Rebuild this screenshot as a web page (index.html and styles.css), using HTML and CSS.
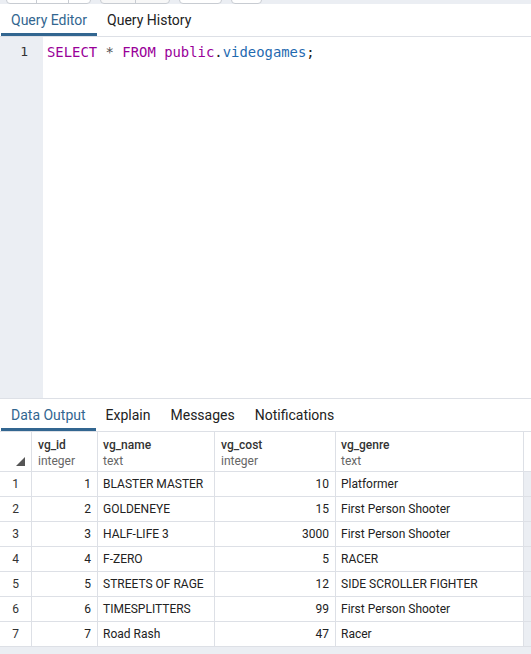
FILE: index.html
```html
<!DOCTYPE html>
<html>
<head>
<meta charset="utf-8">
<link rel="stylesheet" href="styles.css">
</head>
<body>
<div class="app">
  <div class="toolbar">
    <div class="btn-group"><span class="btn w30"></span><span class="btn w32"></span><span class="btn w22"></span></div>
    <div class="btn-group alt"><span class="btn w35"></span><span class="btn w34"></span></div>
    <div class="btn-group"><span class="btn w43"></span></div>
    <div class="btn-group"><span class="btn w30"></span></div>
  </div>
  <div class="tabs">
    <div class="tab active">Query Editor</div>
    <div class="tab">Query History</div>
  </div>
  <div class="editor">
    <div class="gutter"><div class="lineno">1</div></div>
    <div class="code"><span class="kw">SELECT</span> <span class="op">*</span> <span class="kw">FROM</span> <span class="kw">public</span>.<span class="var">videogames</span>;</div>
  </div>
  <div class="tabs lower">
    <div class="tab active">Data Output</div>
    <div class="tab">Explain</div>
    <div class="tab">Messages</div>
    <div class="tab">Notifications</div>
  </div>
  <div class="grid-wrap">
    <div class="grid">
      <div class="row head">
        <div class="cell rn"><span class="sort"></span></div>
        <div class="cell c-id"><div class="hname">vg_id</div><div class="htype">integer</div></div>
        <div class="cell c-name"><div class="hname">vg_name</div><div class="htype">text</div></div>
        <div class="cell c-cost"><div class="hname">vg_cost</div><div class="htype">integer</div></div>
        <div class="cell c-genre"><div class="hname">vg_genre</div><div class="htype">text</div></div>
        <div class="cell c-pad"></div>
      </div>
      <div class="row"><div class="cell rn">1</div><div class="cell c-id num">1</div><div class="cell c-name">BLASTER MASTER</div><div class="cell c-cost num">10</div><div class="cell c-genre">Platformer</div><div class="cell c-pad gray"></div></div>
      <div class="row"><div class="cell rn">2</div><div class="cell c-id num">2</div><div class="cell c-name">GOLDENEYE</div><div class="cell c-cost num">15</div><div class="cell c-genre">First Person Shooter</div><div class="cell c-pad gray"></div></div>
      <div class="row"><div class="cell rn">3</div><div class="cell c-id num">3</div><div class="cell c-name">HALF-LIFE 3</div><div class="cell c-cost num">3000</div><div class="cell c-genre">First Person Shooter</div><div class="cell c-pad gray"></div></div>
      <div class="row"><div class="cell rn">4</div><div class="cell c-id num">4</div><div class="cell c-name">F-ZERO</div><div class="cell c-cost num">5</div><div class="cell c-genre">RACER</div><div class="cell c-pad gray"></div></div>
      <div class="row"><div class="cell rn">5</div><div class="cell c-id num">5</div><div class="cell c-name">STREETS OF RAGE</div><div class="cell c-cost num">12</div><div class="cell c-genre">SIDE SCROLLER FIGHTER</div><div class="cell c-pad gray"></div></div>
      <div class="row"><div class="cell rn">6</div><div class="cell c-id num">6</div><div class="cell c-name">TIMESPLITTERS</div><div class="cell c-cost num">99</div><div class="cell c-genre">First Person Shooter</div><div class="cell c-pad gray"></div></div>
      <div class="row"><div class="cell rn">7</div><div class="cell c-id num">7</div><div class="cell c-name">Road Rash</div><div class="cell c-cost num">47</div><div class="cell c-genre">Racer</div><div class="cell c-pad gray"></div></div>
    </div>
    <div class="grid-rest"></div>
  </div>
</div>
</body>
</html>
```

FILE: styles.css
```css
html, body {
  margin: 0;
  padding: 0;
  background: #fff;
}
body {
  font-family: Roboto, "Liberation Sans", sans-serif;
  color: #222;
}
.app {
  width: 531px;
  height: 654px;
  display: flex;
  flex-direction: column;
  overflow: hidden;
}
.toolbar {
  height: 4px;
  flex: none;
  background: #ebeef3;
  display: flex;
  align-items: flex-end;
  padding-left: 6px;
  gap: 9px;
  overflow: hidden;
}
.btn-group {
  display: flex;
  height: 24px;
  flex: none;
  border: 1px solid #c8ccd2;
  border-radius: 4px;
  background: #fff;
  overflow: hidden;
}
.btn-group.alt { background: #f7f7f7; }
.btn { display: block; height: 100%; border-right: 1px solid #c8ccd2; }
.btn:last-child { border-right: none; }
.w30 { width: 29px; }
.w32 { width: 31px; }
.w22 { width: 21px; }
.w35 { width: 34px; }
.w34 { width: 33px; }
.w43 { width: 41px; }
.tabs {
  display: flex;
  flex: none;
  height: 32px;
  border-bottom: 1px solid #dde0e6;
  padding-left: 1px;
  background: #fff;
}
.tabs.lower {
  border-top: 1px solid #dde0e6;
}
.tab {
  padding: 0 10px;
  font-size: 14px;
  line-height: 32px;
  height: 32px;
  box-sizing: border-box;
  color: #222;
  white-space: nowrap;
}
.tab.active {
  color: #326690;
  border-bottom: 3px solid #326690;
}
.editor {
  height: 361px;
  flex: none;
  display: flex;
}
.gutter {
  width: 43px;
  flex: none;
  background: #ebeef3;
}
.lineno {
  font-family: "DejaVu Sans Mono", "Liberation Mono", monospace;
  font-size: 13px;
  color: #333;
  text-align: right;
  padding-right: 15px;
  line-height: 16px;
  margin-top: 7px;
}
.code {
  font-family: "DejaVu Sans Mono", "Liberation Mono", monospace;
  font-size: 13.9px;
  line-height: 16px;
  margin-top: 7px;
  padding-left: 4px;
  color: #222;
  white-space: pre;
}
.kw { color: #990099; }
.op { color: #555; }
.var { color: #1f6ab0; }
.grid-wrap {
  flex: 1;
  display: flex;
  flex-direction: column;
  background: #ebeef3;
}
.grid { background: #fff; }
.row {
  display: flex;
  height: 25px;
  border-bottom: 1px solid #dde0e6;
  box-sizing: border-box;
  font-size: 12px;
  line-height: 24px;
}
.row.head {
  height: 40px;
  line-height: normal;
}
.cell {
  box-sizing: border-box;
  border-right: 1px solid #dde0e6;
  padding: 0 6px;
  white-space: nowrap;
  overflow: hidden;
  flex: none;
}
.rn { width: 32px; text-align: center; color: #333; padding: 0; position: relative; }
.c-id { width: 66px; }
.c-name { width: 117px; padding-left: 5px; }
.c-cost { width: 121px; }
.c-genre { width: 188px; padding-left: 5px; }
.c-pad { width: 7px; border-right: none; padding: 0; }
.c-pad.gray { background: #ebeef3; }
.num { text-align: right; }
.head .cell { padding-top: 5px; }
.head .rn { padding-top: 0; }
.hname { font-weight: 500; color: #333; font-size: 12px; line-height: 16px; }
.htype { color: #666; font-size: 12px; line-height: 16px; }
.sort {
  position: absolute;
  left: 16px;
  top: 25px;
  width: 0;
  height: 0;
  border-left: 9px solid transparent;
  border-bottom: 9px solid #555;
}
.grid-rest { flex: 1; }
```
